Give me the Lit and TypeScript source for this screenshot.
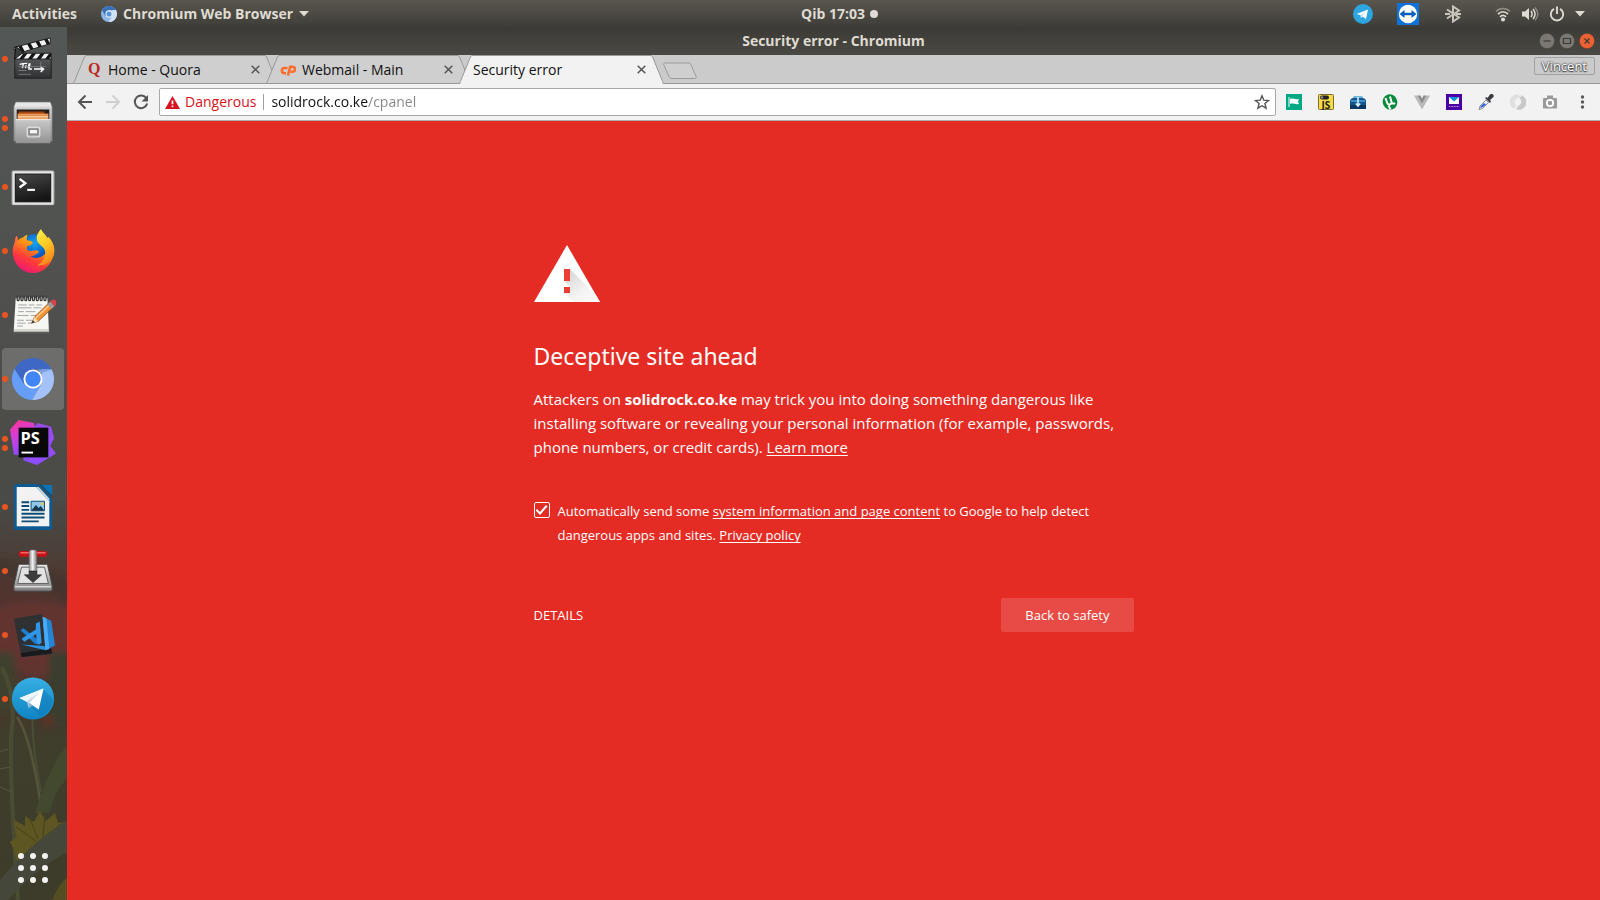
import { LitElement, html, css, svg, nothing, type TemplateResult } from "lit";
import { customElement, property } from "lit/decorators.js";
import { classMap } from "lit/directives/class-map.js";

/* ---------- dock icons, drawn on a 48 x 48 grid ---------- */

const clapper = svg`
  <defs>
    <linearGradient id="slate" x2="0" y2="1"><stop offset="0" stop-color="#555758"/><stop offset="1" stop-color="#2f3132"/></linearGradient>
    <clipPath id="arm"><path d="M4 12 42 2v6L6 19z"/></clipPath>
    <clipPath id="bar"><path d="M5 18h38v6H5z"/></clipPath>
  </defs>
  <path d="M5 23h38v21H5z" fill="url(#slate)" stroke="#1e1f20"/>
  <path d="M4 12 42 2v6L6 19z" fill="#f2f2f2" stroke="#1d1d1d"/>
  <g clip-path="url(#arm)" stroke="#161616" stroke-width="3.500">
    <path d="m8 6 7 13M17 3l7 13M26 1l7 13M35-1l7 13"/>
  </g>
  <path d="M5 18h38v6H5z" fill="#f2f2f2" stroke="#1d1d1d"/>
  <g clip-path="url(#bar)" stroke="#161616" stroke-width="3.500"><path d="m17 17-6 8M26 17l-6 8M35 17l-6 8M44 17l-6 8"/></g>
  <path d="m6 11 8 6-9 7z" fill="#3b3d3e" stroke="#151515"/>
  <path d="M10 29.500c3-1 5-1 8-1m-4 0-1 5m4-3-1 3m4-5-1 5m2-5-1 5" fill="none" stroke="#fff" stroke-width="1.400"/>
  <path d="M19 34.500h4m2 0h10m-3-2 3 2-3 3" fill="none" stroke="#fff" stroke-width="1.500"/>
  <path d="M9 36h8M9 40h13M9 32h28M32 27v6" stroke="#85878a" stroke-width=".8"/>`;

const files = svg`
  <defs>
    <linearGradient id="cab" x2="0" y2="1"><stop offset="0" stop-color="#dcdcdc"/><stop offset="1" stop-color="#8f8f8f"/></linearGradient>
    <linearGradient id="drw" x2="0" y2="1"><stop offset="0" stop-color="#c9c9c9"/><stop offset="1" stop-color="#919191"/></linearGradient>
  </defs>
  <path d="M6 2h36l2 5v36H4V7z" fill="url(#cab)" stroke="#777" stroke-width=".6"/>
  <path d="M5 7h38l-1-4H6z" fill="#e6e6e6"/>
  <path d="M7 10h34v12H7z" fill="#241c18"/>
  <path d="M9 12h27v8H9z" fill="#a34814"/>
  <path d="M8 14h32v8H8z" fill="#d8732a"/>
  <path d="M8 15.500h32" stroke="#f7b877"/><path d="M8 18h32v4H8z" fill="#f0a05a"/>
  <path d="M8 17.500h32" stroke="#fff0de"/>
  <path d="M6 20h36v26H6z" fill="url(#drw)"/><path d="M6 20.500h36" stroke="#efefef"/>
  <rect x="18" y="28.500" width="13" height="10" rx="2" fill="#a8a8a8" stroke="#dcdcdc" stroke-width="1.500"/>
  <rect x="20" y="30.500" width="9" height="5" fill="#f3f3f3" stroke="#6b6b6b"/>
  <path d="M6 45.500h36" stroke="#5d5d5d"/>`;

const terminal = svg`
  <defs><linearGradient id="scr" x2=".3" y2="1"><stop offset="0" stop-color="#4a4a4a"/><stop offset=".6" stop-color="#2a2a2a"/><stop offset="1" stop-color="#161616"/></linearGradient></defs>
  <rect x="2" y="7" width="44" height="36" rx="1.500" fill="#e4e4e4" stroke="#8c8c8c"/>
  <path d="M2 43.500h44" stroke="#555"/>
  <rect x="5.500" y="10.500" width="37" height="29" fill="url(#scr)" stroke="#111"/>
  <path d="m10 15.500 6 4.500-6 4.500" fill="none" stroke="#fff" stroke-width="2.400"/>
  <path d="M18 27h8" stroke="#fff" stroke-width="2.200"/>`;

const firefox = svg`
  <defs>
    <radialGradient id="fxb" cx=".5" cy=".3" r=".7"><stop offset="0" stop-color="#17a5ee"/><stop offset=".6" stop-color="#0a5fc9"/><stop offset="1" stop-color="#1b2a84"/></radialGradient>
    <linearGradient id="fxf" x1=".75" y1="0" x2=".2" y2="1"><stop offset="0" stop-color="#ffd12e"/><stop offset=".35" stop-color="#ff9313"/><stop offset=".65" stop-color="#ff3b3a"/><stop offset="1" stop-color="#e8117d"/></linearGradient>
    <linearGradient id="fxy" x2=".4" y2="1"><stop offset="0" stop-color="#fff44a"/><stop offset=".55" stop-color="#ffc825"/><stop offset="1" stop-color="#ff8a18"/></linearGradient>
  </defs>
  <g transform="translate(.8 1)">
  <circle cx="25" cy="21" r="15.500" fill="url(#fxb)"/>
  <path d="M6 7c1 2 1.500 3.500 1.500 5 1.500-1.500 3-2.500 5-3 1.500-1.500 3-2.500 5-3-1 2-1 4-.5 6 3 0 5 .5 6 2-1 2.500-3 3-6 4-.5 2 0 3 0 3.500 3 2.500 6 1.500 9 .8 2.200-.3 3.500 1 3 2.200-2.500 2-4.500 4-8.500 4 6 4 16 1 18-9 1-6-1-10-3-12 8 3 12 12 9 20.500C42 37.500 34 46 23.500 46 12 46 2 37 2 24c0-5 1-7 2.500-9.500C4.500 12 5 9 6 7z" fill="url(#fxf)"/>
  <path d="M31.500 0c-2 2.500-4.500 6-4.500 9.500C27 17 35 17 36 24c.5 6-3 12-8.500 14 8 1 16-4 17.500-12 .8-6-.5-12-5.500-18C39 9 39 9.500 38.500 10 37 6 33 4 31.500 0z" fill="url(#fxy)"/>
  <path d="M6 7c1 2 1.500 3.500 1.500 5-3 3-3.500 8-3 12C3 18 4 11 6 7z" fill="#ff6a3a"/>
  </g>`;

const notes = svg`
  <g transform="translate(.5 1.500)">
  <path d="M5 6h34l2 36H3z" fill="#5a5a58"/>
  <path d="M5.500 5h33l1.500 32H3.500z" fill="#f6f6f3"/><path d="M3.500 37H40l.2 3H3.300z" fill="#d5d7cd"/>
  <g stroke="#333" stroke-width="1.300" fill="#efefef">${[8, 12, 16, 20, 24, 28, 32, 36].map((x) => svg`<rect x=${x - 1} y="2.500" width="2" height="5" rx="1"/>`)}</g>
  <path d="M8 12h9m2 0h6m2 0h6M8 15h14m2 0h8M8 19h6m2 0h10M7 23h12m2 0h6M7 28h7m2 0h7M7 31h9m2 0h4M7 34h6" stroke="#9a9a98" stroke-width=".9"/>
  <path d="m22 31 3-6.500L41 9l4.500 4.500L29 29z" fill="#f0953a" stroke="#8a4a12" stroke-width=".8"/>
  <path d="m26.500 25.500 16-15" stroke="#ffc98a" stroke-width="1.500"/>
  <path d="m22 31 3-6.500 4 4.500z" fill="#f6dcb6"/><path d="m22 31 1.400-3 1.800 2z" fill="#222"/>
  <path d="m38.500 11.500 3-3 4.500 4.500-3 3z" fill="#9a9c9d"/>
  <path d="M41.500 8.500c2-2.500 6-2.500 7 0s0 4-2.500 4.500z" fill="#dd4048"/>
  </g>`;

const chromium = svg`
  <path d="M24 2A22 22 0 0 1 43.500 14H24L14 30 4.700 13.500A22 22 0 0 1 24 2z" fill="#3f67c4"/>
  <path d="M4.700 13.500A22 22 0 0 0 23 46l9.500-16L24 24 14.500 29z" fill="#669df6"/>
  <path d="M43.500 14A22 22 0 0 1 23 46l10-17V14z" fill="#a4c2fa"/>
  <path d="m29 14 14.500 0-11 4z" fill="#7ca0e6"/>
  <circle cx="24" cy="24" r="10" fill="#fff"/><circle cx="24" cy="24" r="8" fill="#4285f4"/>`;

const phpstorm = svg`
  <defs>
    <linearGradient id="ps1" x2=".3" y2="1"><stop offset="0" stop-color="#ff318c"/><stop offset=".45" stop-color="#d63fd6"/><stop offset="1" stop-color="#8a4bff"/></linearGradient>
    <linearGradient id="ps2" x1=".6" y1="0" x2=".5" y2="1"><stop offset="0" stop-color="#9a4be8"/><stop offset="1" stop-color="#8d4dff"/></linearGradient>
  </defs>
  <path d="M24 8 29 3l14 4 3 12-4 8 6 8-20 12-14-5V10z" fill="url(#ps2)"/>
  <path d="M0 10 9 0l16 3 1 6-13 28-9-1z" fill="url(#ps1)"/>
  <path d="M9 8h31v31H9z" fill="#080808"/>
  <text x="11" y="25" font-family="'Open Sans', sans-serif" font-weight="700" font-size="17" fill="#fff">PS</text>
  <path d="M12 34h12" stroke="#fff" stroke-width="2"/>`;

const writer = svg`
  <path d="M6 0h23l15 16v29a3 3 0 0 1-3 3H6a2 2 0 0 1-2-2V2a2 2 0 0 1 2-2z" fill="#0e5b94"/>
  <path d="M32 1h12v11z" fill="#0a73b5"/><path d="m31 0 13 13" stroke="#0b4f80" stroke-width="1.500"/>
  <path d="M7 3h20l14 15v26H7z" fill="#f2f2f2"/><path d="m27 3 14 15v-3L30 3z" fill="#cfd8de"/>
  <path d="M12 19h8M12 23h8M12 27h8M12 31h24M12 35h24M12 39h18" stroke="#0e4d78" stroke-width="2"/>
  <path d="M22 18h14v10H22z" fill="#8fc7ea" stroke="#0e4d78"/><path d="m22 28 5-6 3 3 2-2 4 5z" fill="#163a52"/><circle cx="33.500" cy="20.500" r="1.500" fill="#f6c344"/>`;

const transmission = svg`
  <defs>
    <linearGradient id="trm" x2="0" y2="1"><stop offset="0" stop-color="#e9e9e9"/><stop offset="1" stop-color="#7f7f7f"/></linearGradient>
    <linearGradient id="rod"><stop offset="0" stop-color="#8e8e8e"/><stop offset=".45" stop-color="#f3f3f3"/><stop offset="1" stop-color="#777"/></linearGradient>
  </defs>
  <path d="M9 17h30l5 22v4a2 2 0 0 1-2 2H6a2 2 0 0 1-2-2v-4z" fill="url(#trm)" stroke="#454545"/>
  <path d="M12 20h24l4 17H8z" fill="#e2e2e2" stroke="#5e5e5e"/>
  <path d="M5 40.500h38" stroke="#fff"/>
  <rect x="9" y="3" width="30" height="6" rx="3" fill="#c81219"/><path d="M11 5h26" stroke="#ff6a6a" stroke-width="1.500"/>
  <rect x="20" y="2" width="8" height="25" rx="2" fill="url(#rod)" stroke="#666" stroke-width=".6"/>
  <path d="M20 24h8v4h5l-9 8-9-8h5z" fill="#3d3d3d" stroke="#222" stroke-width=".6"/>`;

const vscode = svg`
  <path d="m4 7 29-5 10 38 1 4-32 3z" fill="#2f3032"/><path d="m11 43 32-5 1 5-32 4z" fill="#191a1b"/>
  <path d="m34 5 9 4 4 26-10 5z" fill="#2484d2"/><path d="m34 5 4 1.500 3 32-4 1.500z" fill="#48aaf6"/>
  <path d="m12 34 24 1.500L37 40z" fill="#2a93e6"/>
  <path d="m11 19 3-2 18 14-1 3-5-1z" fill="#1f7fce"/>
  <path d="m12 28 3 3 14-9V17z" fill="#2f97e8"/>
  <path d="m27 12 4-2 2 22-3 2-2-3-1-12z" fill="#2f97e8"/>`;

const telegram = svg`
  <defs><linearGradient id="tgd" x2="0" y2="1"><stop offset="0" stop-color="#37aee2"/><stop offset="1" stop-color="#0f84c4"/></linearGradient></defs>
  <circle cx="24" cy="23.500" r="22" fill="url(#tgd)"/>
  <path d="m35 14 10 10a21 21 0 0 1-13 18l-9-9z" fill="#0c76b4" opacity=".45"/>
  <path d="m10 23 25-10-5 22-9-6z" fill="#fff"/><path d="m18 26 13-9-11 11-1 6z" fill="#b9d4e6"/><path d="m19 34 1.500-6 3 2.500z" fill="#93b8d2"/><path d="m10 23 25-10-17 13z" fill="#eef6fb"/>`;

/* ---------- toolbar extension icons, 16 x 16 ---------- */

const extensions: { label: string; art: TemplateResult }[] = [
  { label: "Flag", art: svg`<path d="M0 0h16v16H0z" fill="#00a983"/><path d="M3 3v10" stroke="#fff"/><path d="M4 5c3-1.500 4 1 9 0l-1 2.500 1 2.500c-4 1-6-1.500-9 0z" fill="#fff"/>` },
  { label: "JavaScript switch", art: svg`<rect x=".5" y=".5" width="15" height="15" rx="1" fill="#f5d945" stroke="#7c6f2c"/><rect x="2" y="1.500" width="9" height="4" rx="2" fill="#222"/><circle cx="4" cy="3.500" r="1.300" fill="#888"/><text x="3.500" y="14.500" font-family="'Open Sans', sans-serif" font-weight="700" font-size="10" fill="#1c1c1c">JS</text>` },
  { label: "Downloads", art: svg`<path d="M2 5 4 2h8l2 3z" fill="#6fb6dc"/><path d="M0 7c0-2 2-3 4-3h8c2 0 4 1 4 3v7H0z" fill="#12568c"/><path d="M0 11h16v4H0z" fill="#0a3860"/><path d="M1 6h14v2H1z" fill="#3992c9"/><path d="M8 3v9M5.800 9.500 8 12l2.200-2.500" fill="none" stroke="#d6f0ff" stroke-width="1.600"/>` },
  { label: "Torrent", art: svg`<ellipse cx="8" cy="8" rx="7.200" ry="7.800" fill="#0a8a3c" transform="rotate(-20 8 8)"/><path d="M3.500 4 5 8.500c.8 2.800 5 2.500 4.500-.5L8 2.500M9.500 8.500c.8 1.500 2.700 1.300 3.500.5M6.500 11.500l2 4" fill="none" stroke="#fff" stroke-width="2"/>` },
  { label: "Vue devtools", art: svg`<path d="M0 1.500h3.500L8 10l4.500-8.500H16L8 15.500z" fill="#b9b9b9"/><path d="M3.500 1.500h3L8 4.500l1.500-3h3L8 10z" fill="#8d8d8d"/>` },
  { label: "Mail", art: svg`<path d="M0 0h16v16H0z" fill="#4c00a4"/><path d="M3 3h10v7H3z" fill="#fff"/><path d="M3 3h10L8 7.500z" fill="#168fe0"/><path d="M3 12.500h10" stroke="#b699dc" stroke-dasharray="1 .6"/>` },
  { label: "Colour picker", art: svg`<path d="M1 15.500 2 12l6-6 2.500 2.500-6 6z" fill="#e8eef8" stroke="#777" stroke-width=".8"/><path d="m2 14 1-2 3-3 2 1.500L5 13z" fill="#2c5fd6"/><path d="m7 4 5 5 1-1.500-1-1.500 3-2.500a2 2 0 0 0-3-3L9.500 4 8.300 3z" fill="#3c3c40"/>` },
  { label: "Sync", art: svg`<path d="M9.500.5A7.500 7.500 0 0 0 5 15l-.5-2 3 .5L6 11.500A4.500 4.500 0 0 1 8 4z" fill="#e0e0e0"/><path d="M6.500 15.500A7.500 7.500 0 0 0 11 1l.5 2-3-.5L10 4.500A4.500 4.500 0 0 1 8 12z" fill="#c8c8c8"/>` },
  { label: "Screenshot", art: svg`<path d="M5 1.500h6V4h3.500l.5 1v9l-.5.500h-13L1 14V5l.5-1H5z" fill="#9a9a9a"/><circle cx="8" cy="9" r="3.200" fill="none" stroke="#fff" stroke-width="1.800"/>` },
  { label: "Menu", art: svg`<g fill="#5a5a5a"><circle cx="8.500" cy="3" r="1.700"/><circle cx="8.500" cy="8" r="1.700"/><circle cx="8.500" cy="13" r="1.700"/></g>` },
];

interface DockApp { name: string; art: TemplateResult; windows: number; active?: boolean }

const dockApps: DockApp[] = [
  { name: "Video editor", art: clapper, windows: 1 },
  { name: "Files", art: files, windows: 2 },
  { name: "Terminal", art: terminal, windows: 1 },
  { name: "Firefox", art: firefox, windows: 1 },
  { name: "Text editor", art: notes, windows: 1 },
  { name: "Chromium", art: chromium, windows: 1, active: true },
  { name: "PhpStorm", art: phpstorm, windows: 2 },
  { name: "LibreOffice Writer", art: writer, windows: 1 },
  { name: "Transmission", art: transmission, windows: 1 },
  { name: "Visual Studio Code", art: vscode, windows: 1 },
  { name: "Telegram", art: telegram, windows: 1 },
];

const shared = css`
  * { box-sizing: border-box; }
  svg { display: block; flex: none; }
  button {
    margin: 0; padding: 0; border: 0; background: none; color: inherit;
    font: inherit; cursor: pointer;
  }
`;

@customElement("system-bar")
export class SystemBar extends LitElement {
  static styles = [shared, css`
    :host {
      display: grid; grid-template-columns: 1fr 1fr; align-items: center; height: 27px;
      background: linear-gradient(#5a564e, #3e3d39); color: #dfdbd2;
      font: 700 14px/20px "Open Sans", sans-serif;
    }
    .side { display: flex; align-items: center; }
    .left { padding-left: 12px; gap: 24px; }
    .right { padding-left: 1px; padding-right: 15px; }
    .app { display: flex; align-items: center; gap: 6px; }
    .clock { display: flex; align-items: center; gap: 5px; }
    .tray { display: flex; align-items: center; margin-left: auto; }
    .wide { display: flex; align-items: center; gap: 24px; margin-right: 32px; }
    .status { display: flex; align-items: center; gap: 10px; }
  `];
  render() {
    return html`
      <div class="side left">
        <button>Activities</button>
        <button class="app">
          <svg width="16" height="16" viewBox="2 2 44 44">
            <circle cx="24" cy="24" r="22" fill="#8db6e6"/><path d="M5 13A22 22 0 0 1 43 13H24L14 30z" fill="#3a70b8"/>
            <path d="M43 13A22 22 0 0 1 23 46l10-17V13z" fill="#cfe1f6"/><circle cx="24" cy="24" r="10" fill="#e6f0fb"/><circle cx="24" cy="24" r="7" fill="#5a93d8"/>
          </svg>
          Chromium Web Browser
          <svg width="10" height="6" viewBox="0 0 10 6"><path d="M0 0h10L5 5.500z" fill="#dfdbd2"/></svg>
        </button>
      </div>
      <div class="side right">
        <button class="clock">Qib 17:03
          <svg width="8" height="8" viewBox="0 0 8 8"><circle cx="4" cy="4" r="4" fill="#dfdbd2"/></svg>
        </button>
        <div class="tray">
          <div class="wide">
            <svg width="20" height="20" viewBox="0 0 20 20"><circle cx="10" cy="10" r="10" fill="#2ca5e0"/><path d="m3.500 10 11.500-4.500-2 9.500-3.500-2.500L8 14l-.5-3z" fill="#fff"/><path d="m7.500 11 6-4-4.500 5-1 2z" fill="#c3dcea"/></svg>
            <svg width="22" height="22" viewBox="0 0 22 22"><path d="M0 0h22v22H0z" fill="#0e72d8"/><circle cx="11" cy="11" r="9.200" fill="#fff"/><path d="m2.500 11 5-4v2.800h7V7l5 4-5 4v-2.800h-7V15z" fill="#0e5fb8"/></svg>
            <svg width="20" height="18" viewBox="0 0 20 18"><path d="m4 4.500 12 8-6 4v-15l6 4-12 8M2 9h5M13 9h5" fill="none" stroke="#c9c5bc" stroke-width="2"/></svg>
          </div>
          <div class="status">
            <svg width="16" height="16" viewBox="0 0 16 16" fill="none" stroke="#dfdbd2" stroke-width="1.700"><path d="M1 5.500c4-4 10-4 14 0" opacity=".45"/><path d="M3 8.200c3-3 7-3 10 0M5 10.800c2-1.800 4-1.800 6 0"/><circle cx="8" cy="13.500" r="1.200" fill="#dfdbd2"/></svg>
            <svg width="18" height="16" viewBox="0 0 18 16"><path d="M1 5.500h3L8 2v12L4 10.500H1z" fill="#dfdbd2"/><path d="M10 5c1.500 2 1.500 4 0 6M12 3c2.500 3 2.500 7 0 10" fill="none" stroke="#dfdbd2" stroke-width="1.500"/><path d="M14 1.500c3.500 4 3.500 9 0 13" fill="none" stroke="#dfdbd2" stroke-width="1.300" opacity=".45"/></svg>
            <svg width="16" height="16" viewBox="0 0 16 16" fill="none" stroke="#dfdbd2" stroke-width="1.900"><path d="M5 2.800a6.200 6.200 0 1 0 6 0M8 .5V8"/></svg>
            <svg width="10" height="6" viewBox="0 0 10 6"><path d="M0 0h10L5 5.500z" fill="#dfdbd2"/></svg>
          </div>
        </div>
      </div>`;
  }
}

@customElement("app-dock")
export class AppDock extends LitElement {
  static styles = [shared, css`
    :host { display: grid; width: 67px; overflow: hidden; background: #50524f; }
    .wall, .items { grid-area: 1 / 1; min-height: 0; }
    .wall { width: 100%; height: 100%; }
    .items { display: flex; flex-direction: column; z-index: 1; }
    .app {
      position: relative; display: grid; place-items: center;
      width: 62px; height: 62px; margin: 1px 2px; border-radius: 4px;
    }
    .active { background: rgba(255, 255, 255, 0.18); }
    .dots {
      position: absolute; left: 0; top: 0; bottom: 0; width: 6px;
      display: flex; flex-direction: column; justify-content: center; gap: 3px;
    }
    .dot { width: 6px; height: 6px; border-radius: 50%; background: #e95420; }
    .grid { margin: auto 18px 17px; width: 30px; height: 30px; }
  `];
  render() {
    return html`
      <svg class="wall" viewBox="0 0 67 873" preserveAspectRatio="none" aria-hidden="true">
        <defs>
          <linearGradient id="w" x2="0" y2="1">
            <stop offset="0" stop-color="#535756"/><stop offset=".3" stop-color="#50514f"/><stop offset=".54" stop-color="#4a4a46"/>
            <stop offset=".6" stop-color="#4b403a"/><stop offset=".64" stop-color="#50352f"/><stop offset=".72" stop-color="#573230"/>
            <stop offset=".78" stop-color="#44382c"/><stop offset=".82" stop-color="#3f3e2c"/><stop offset="1" stop-color="#3d3c2a"/>
          </linearGradient>
          <filter id="soft" x="-30%" width="160%"><feGaussianBlur stdDeviation="3"/></filter>
          <filter id="thin"><feGaussianBlur stdDeviation=".7"/></filter>
        </defs>
        <path d="M0 0h67v873H0z" fill="url(#w)"/>
        <g filter="url(#soft)">
          <path d="M-10 585q40-20 90 0v45q-20 20-40 20T-10 620z" fill="#653331" opacity=".8"/>
          <path d="M-10 545q40 5 90 35v-22q-40-20-90-30z" fill="#3c322c" opacity=".6"/>
          <path d="M50 625h30v70H44z" fill="#3b3e2d"/>
          <path d="M-10 625h24l6 60H-10z" fill="#3f402e"/>
          <circle cx="48" cy="694" r="6" fill="#5b3228"/>
        </g>
        <g filter="url(#thin)" fill="none">
          <path d="M2 640q14 30 10 60t6 173" stroke="#4a4c33" stroke-width="4"/>
          <path d="M17 690q14 20 24 90" stroke="#56553a" stroke-width="2.500"/>
          <path d="M33 670q-3 40 8 95" stroke="#4a4d35" stroke-width="2"/>
          <path d="M0 725l8-3M0 742l10-2M0 760l12 5" stroke="#55553f"/>
          <path d="M67 718q-18 22-32 68h14q8-26 18-34z" fill="#43482f"/>
          <path d="M14 793l11 6 0-10 9 6 6-11 6 10 9-8 3 10 9-1-6 11 6 9-10 2 0 14-40 4-3-12-4-8 6-4z" fill="#5d5720"/>
          <path d="M16 800l20 14M30 792l8 20M45 788l-2 22M60 797l-14 14" stroke="#46421d"/>
          <path d="M67 793q-40 26-67 60v20h8q26-30 59-48z" fill="#45473a"/>
          <path d="M52 873q8-18 15-22v22z" fill="#544d22"/>
        </g>
      </svg>
      <nav class="items" aria-label="Dock">
        ${dockApps.map((a) => html`
          <button class=${classMap({ app: true, active: !!a.active })} aria-label=${a.name}>
            <svg width="46" height="46" viewBox="0 0 48 48">${a.art}</svg>
            <span class="dots">${Array.from({ length: a.windows }, () => html`<span class="dot"></span>`)}</span>
          </button>`)}
        <button class="grid" aria-label="Show applications">
          <svg width="30" height="30" viewBox="0 0 30 30" fill="#f2f2f0">
            ${[3, 15, 27].map((y) => [3, 15, 27].map((x) => svg`<circle cx=${x} cy=${y} r="3"/>`))}
          </svg>
        </button>
      </nav>`;
  }
}

@customElement("browser-tab")
export class BrowserTab extends LitElement {
  @property() label = "";
  @property({ type: Boolean, reflect: true }) selected = false;
  @property({ attribute: false }) icon: TemplateResult | typeof nothing = nothing;
  static styles = [shared, css`
    :host { display: grid; width: 205px; margin-right: -12px; height: 29px; z-index: 0; }
    :host([selected]) { z-index: 1; }
    .shape, .row { grid-area: 1 / 1; }
    .row {
      display: flex; align-items: center; gap: 6px; padding: 0 17px 0 14px; z-index: 1;
      font: 14px/20px "Open Sans", sans-serif; color: #111;
    }
    .name { flex: 1; white-space: nowrap; text-align: left; }
    .close { display: grid; place-items: center; width: 12px; height: 12px; }
  `];
  render() {
    const on = this.selected;
    return html`
      <svg class="shape" width="205" height="29" viewBox="0 0 205 29">
        <path d="M0 28.500C1 28 1 27 2 25L11 3c.8-1.800 1-2.500 3-2.500h177c2 0 2.500.7 3 2.500l9 22c1 2 1 3 2 3.500z" fill=${on ? "#f2f2f2" : "#cfcfcf"}/>
        <path d="M0 28.500C1 28 1 27 2 25L11 3c.8-1.800 1-2.500 3-2.500h177c2 0 2.500.7 3 2.500l9 22c1 2 1 3 2 3.500" fill="none" stroke="#989898"/>
        ${on ? svg`<path d="M2 28.500h201" stroke="#f2f2f2"/>` : svg`<path d="M0 28.500h205" stroke="#989898"/>`}
      </svg>
      <div class="row">
        ${this.icon}
        <button class="name">${this.label}</button>
        <button class="close" aria-label="Close tab">
          <svg width="9" height="9" viewBox="0 0 9 9"><path d="m.7.7 7.600 7.600m0-7.600L.7 8.300" stroke="#555" stroke-width="1.500"/></svg>
        </button>
      </div>`;
  }
}

@customElement("browser-chrome")
export class BrowserChrome extends LitElement {
  static styles = [shared, css`
    :host { display: block; font: 14px/20px "Open Sans", sans-serif; }
    .title {
      display: grid; grid-template-columns: 1fr auto 1fr; align-items: center; height: 28px;
      padding: 0 5px; background: linear-gradient(#3b3a36, #4b4943);
      font-weight: 700; color: #dfdbd2;
    }
    .controls { grid-column: 3; justify-self: end; display: flex; gap: 4px; }
    .caption { grid-column: 2; }
    .strip {
      display: flex; align-items: flex-start; height: 29px; padding: 0 5px 0 6px;
      background: linear-gradient(#989898, #989898) bottom / 100% 1px no-repeat #cbcbcb;
    }
    .new { margin: 6px 0 0 10px; }
    .user {
      margin: 2px 0 0 auto; height: 18px; padding: 0 7px; border: 1px solid #a0a0a0; border-radius: 2px;
      font-size: 13px; line-height: 16px; color: #fff;
      text-shadow: 0 0 2px #333, 0 0 2px #444, 0 1px 1px #555;
    }
    .bar {
      display: flex; align-items: center; height: 37px; padding: 0 2px 0 4px;
      background: #f2f2f2; border-bottom: 1px solid #b0aeac;
    }
    .tool { display: grid; place-items: center; width: 28px; height: 28px; }
    .ext { display: grid; place-items: center; width: 32px; height: 28px; }
    .omni {
      flex: 1; display: flex; align-items: center; height: 28px; margin: 0 2px 0 4px; padding: 0 5px;
      border: 1px solid #a8a8a8; border-radius: 2px; background: #fff;
    }
    .danger { display: flex; align-items: center; gap: 5px; color: #d8121e; }
    .rule { width: 1px; height: 16px; margin: 0 7px; background: #a0a0a0; }
    .url {
      flex: 1; min-width: 0; border: 0; padding: 0; outline: 0; font: inherit; color: transparent;
      background: linear-gradient(90deg, #111 97px, #858585 97px);
      -webkit-background-clip: text; background-clip: text;
    }
  `];
  render() {
    const quora = html`<svg width="15" height="18" viewBox="0 0 15 18"><text x="1" y="13" font-family="'Liberation Serif', serif" font-weight="700" font-size="16" fill="#b92b27">Q</text></svg>`;
    const cpanel = html`<svg width="16" height="16" viewBox="0 0 16 16" fill="none" stroke="#ff6c2c" stroke-width="2.600"><path d="M7.500 6H4.500a2.600 2.600 0 0 0 0 5.200H6M8 13.500l2.200-8.800h2.300a2.400 2.400 0 0 1 0 5H10.500"/></svg>`;
    return html`
      <div class="title">
        <span class="caption">Security error - Chromium</span>
        <div class="controls">
          ${[
            { n: "Minimize", fill: "#7b7871", d: "M4.500 8h7" },
            { n: "Maximize", fill: "#7b7871", d: "M4.500 5.500h7v5h-7z" },
            { n: "Close", fill: "#ec6134", d: "m5.500 5.500 5 5m0-5-5 5" },
          ].map((b) => html`<button aria-label=${b.n}>
            <svg width="16" height="16" viewBox="0 0 16 16"><circle cx="8" cy="8" r="7.700" fill=${b.fill} stroke="#35342f" stroke-width=".5"/><path d=${b.d} fill="none" stroke="#3a3935" stroke-width="1.200"/></svg>
          </button>`)}
        </div>
      </div>
      <div class="strip">
        <browser-tab label="Home - Quora" .icon=${quora}></browser-tab>
        <browser-tab label="Webmail - Main" .icon=${cpanel}></browser-tab>
        <browser-tab label="Security error" selected></browser-tab>
        <button class="new" aria-label="New tab">
          <svg width="36" height="19" viewBox="0 0 36 19"><path d="M3 1.500h23c2 0 2.500.5 3 2l5 11c.6 1.500 0 2.500-1.500 2.500H10c-2 0-2.500-.5-3-2l-5-11c-.6-1.500-.5-2.500 1-2.500z" transform="translate(0 .5)" fill="#cfcfcf" stroke="#9c9c9c"/></svg>
        </button>
        <button class="user">Vincent</button>
      </div>
      <div class="bar">
        <button class="tool" aria-label="Back"><svg width="16" height="16" viewBox="0 0 16 16" fill="none" stroke="#555" stroke-width="2"><path d="M15 8H2M8.500 1.500 2 8l6.500 6.500"/></svg></button>
        <button class="tool" aria-label="Forward"><svg width="16" height="16" viewBox="0 0 16 16" fill="none" stroke="#cfcfcf" stroke-width="2"><path d="M1 8h13M7.500 1.500 14 8l-6.500 6.500"/></svg></button>
        <button class="tool" aria-label="Reload"><svg width="16" height="16" viewBox="0 0 16 16"><path d="M13.500 4.500A6.300 6.300 0 1 0 14.200 9.500" fill="none" stroke="#555" stroke-width="2"/><path d="M15 1v6.500H8.500z" fill="#555"/></svg></button>
        <div class="omni">
          <span class="danger">
            <svg width="15" height="13" viewBox="0 0 15 13"><path d="M7.500 0 15 13H0z" fill="#d8121e"/><path d="M7.500 4.500v3.800M7.500 9.500v1.800" stroke="#fff" stroke-width="1.700"/></svg>
            Dangerous
          </span>
          <span class="rule"></span>
          <input class="url" type="text" aria-label="Address" spellcheck="false" .value=${"solidrock.co.ke/cpanel"}>
          <button aria-label="Bookmark"><svg width="16" height="16" viewBox="0 0 16 16"><path d="m8 1.800 1.800 4.400 4.700.3-3.600 3 1.200 4.700L8 11.700l-4.100 2.500 1.200-4.700-3.600-3 4.700-.3z" fill="none" stroke="#555" stroke-width="1.400"/></svg></button>
        </div>
        ${extensions.map((e) => html`<button class="ext" aria-label=${e.label}><svg width="16" height="16" viewBox="0 0 16 16">${e.art}</svg></button>`)}
      </div>`;
  }
}

@customElement("warning-page")
export class WarningPage extends LitElement {
  static styles = [shared, css`
    :host {
      display: block; padding: 124px 24px 40px; background: #e42c25; color: #fff;
      font: 13px/24px "Open Sans", sans-serif;
    }
    .page { max-width: 600px; margin: 0 auto; }
    h1 { margin: 40px 0 17px; font: 400 23px/28px "Noto Sans", sans-serif; }
    p { margin: 0; font-size: 15px; }
    a { color: inherit; text-decoration: underline; text-underline-offset: 2px; text-decoration-skip-ink: none; }
    .opt { display: flex; gap: 8px; margin-top: 40px; }
    .opt input {
      appearance: none; flex: none; width: 16px; height: 16px; margin: 3px 0 0;
      border: 1px solid #fff; border-radius: 2px; display: grid; place-items: center;
    }
    .opt input:checked::before {
      content: ""; width: 12px; height: 12px; background: #fff;
      clip-path: polygon(0 55%, 13% 42%, 37% 66%, 87% 8%, 100% 20%, 38% 92%);
    }
    .actions { display: flex; align-items: center; justify-content: space-between; margin-top: 51px; }
    .back { height: 34px; padding: 0 24px; border-radius: 2px; background: rgba(255, 255, 255, 0.15); }
  `];
  render() {
    return html`
      <main class="page">
        <svg width="67" height="57" viewBox="0 0 67 57">
          <defs>
            <linearGradient id="sh" x2=".8" y2="1"><stop offset="0" stop-color="#d2d2d2"/><stop offset=".6" stop-color="#f4f4f4"/><stop offset="1" stop-color="#fafafa"/></linearGradient>
            <clipPath id="tri"><path d="M33 0 66 57H0z"/></clipPath>
          </defs>
          <path d="M33 0 66 57H0z" fill="#fff"/>
          <g clip-path="url(#tri)" fill="url(#sh)"><path d="m36 24 36 36H43L30 48h6v-6l-6-6h6z"/></g>
          <path d="M30 24h6v12h-6zM30 42h6v6h-6z" fill="#ec3d35"/>
        </svg>
        <h1>Deceptive site ahead</h1>
        <p>Attackers on <strong>solidrock.co.ke</strong> may trick you into doing something dangerous like installing software or revealing your personal information (for example, passwords, phone numbers, or credit cards). <a href="#learn">Learn more</a></p>
        <div class="opt">
          <input id="send" type="checkbox" checked>
          <label for="send">Automatically send some <a href="#info">system information and page content</a> to Google to help detect dangerous apps and sites. <a href="#privacy">Privacy policy</a></label>
        </div>
        <div class="actions">
          <button>DETAILS</button>
          <button class="back">Back to safety</button>
        </div>
      </main>`;
  }
}

@customElement("app-root")
export class AppRoot extends LitElement {
  static styles = css`
    :host { display: flex; flex-direction: column; min-height: 100vh; }
    .desk { flex: 1; display: flex; }
    .window { flex: 1; min-width: 0; display: flex; flex-direction: column; }
    .content { flex: 1; }
  `;
  render() {
    return html`
      <system-bar></system-bar>
      <div class="desk">
        <app-dock></app-dock>
        <div class="window">
          <browser-chrome></browser-chrome>
          <warning-page class="content"></warning-page>
        </div>
      </div>`;
  }
}
